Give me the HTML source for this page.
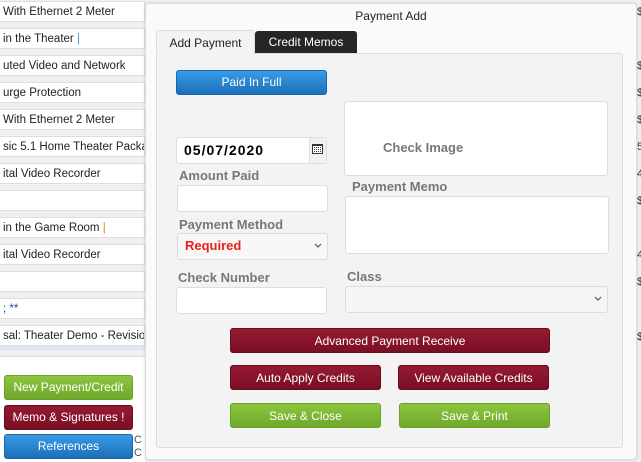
<!DOCTYPE html>
<html><head><style>
*{box-sizing:border-box;margin:0;padding:0}
body{width:641px;height:462px;position:relative;overflow:hidden;background:#f0f0f0;font-family:"Liberation Sans",sans-serif;font-size:11px;color:#222}
.a{position:absolute}
.row{position:absolute;left:0;width:145px;height:21px;background:#fff;border:1px solid #ddd;border-left:none;padding:4px 0 0 3px;white-space:nowrap;overflow:hidden;font-size:11.5px}
.btn{position:absolute;border-radius:3px;color:#fff;text-align:center;font-size:12px}
.red{background:linear-gradient(#951a32,#7a0f24);border:1px solid #6a0c1e}
.grn{background:linear-gradient(#8cc63f,#6fa82b);border:1px solid #68a028}
.blu{background:linear-gradient(#3a9be6,#1b6fb8);border:1px solid #1a66a8}
.lbl{position:absolute;font-weight:bold;color:#777;font-size:13px}
.inp{position:absolute;background:#fff;border:1px solid #ddd;border-radius:3px}
.r{position:absolute;left:637px;font-size:11px;color:#333}
</style></head><body>
<div class="row" style="top:1px">With Ethernet 2 Meter</div>
<div class="row" style="top:28px">in the Theater <span style="color:#4a90e2">|</span></div>
<div class="row" style="top:55px">uted Video and Network</div>
<div class="row" style="top:82px">urge Protection</div>
<div class="row" style="top:109px">With Ethernet 2 Meter</div>
<div class="row" style="top:136px">sic 5.1 Home Theater Package</div>
<div class="row" style="top:163px">ital Video Recorder</div>
<div class="row" style="top:190px"></div>
<div class="row" style="top:217px">in the Game Room <span style="color:#d08a30">|</span></div>
<div class="row" style="top:244px">ital Video Recorder</div>
<div class="row" style="top:271px"></div>
<div class="row" style="top:298px;color:#1a4fa0">; **</div>
<div class="row" style="top:325px">sal: Theater Demo - Revision:</div>
<div class="a" style="left:0;top:346px;width:145px;height:4px;background:#dde6f0"></div>
<div class="a" style="left:0;top:356px;width:145px;height:106px;background:#fff;border-top:1px solid #ddd"></div>
<div class="btn grn" style="left:4px;top:375px;width:129px;height:25px;line-height:23px">New Payment/Credit</div>
<div class="btn red" style="left:4px;top:405px;width:129px;height:25px;line-height:23px">Memo &amp; Signatures !</div>
<div class="btn blu" style="left:4px;top:434px;width:129px;height:25px;line-height:23px">References</div>
<div class="a" style="left:134px;top:434px;font-size:11px;color:#555;line-height:13px">C<br>C</div>
<div class="r" style="top:6px">$</div><div class="r" style="top:60px">$</div><div class="r" style="top:87px">$</div><div class="r" style="top:114px">$</div><div class="r" style="top:141px">5</div><div class="r" style="top:168px">4</div><div class="r" style="top:195px">$</div><div class="r" style="top:249px">4</div><div class="r" style="top:276px">$</div><div class="r" style="top:331px">$</div>
<div class="a" style="left:145px;top:3px;width:492px;height:457px;background:#fafafa;border:1px solid #ddd;border-radius:4px;box-shadow:0 0 3px rgba(0,0,0,.15)"></div>
<div class="a" style="left:145px;top:9px;width:492px;text-align:center;font-size:12px">Payment Add</div>
<div class="a" style="left:156px;top:53px;width:467px;height:395px;background:#f3f3f3;border:1px solid #ddd;border-radius:3px"></div>
<div class="a" style="left:156px;top:30px;width:99px;height:24px;background:#f3f3f3;border:1px solid #ddd;border-bottom:none;border-radius:3px 3px 0 0;text-align:center;line-height:25px;font-size:12px">Add Payment</div>
<div class="a" style="left:255px;top:31px;width:102px;height:22px;background:#262626;border-radius:3px 3px 0 0;color:#fff;text-align:center;line-height:23px;font-size:12px">Credit Memos</div>
<div class="btn blu" style="left:176px;top:70px;width:151px;height:25px;line-height:23px">Paid In Full</div>
<div class="inp" style="left:344px;top:101px;width:264px;height:75px"></div>
<div class="a" style="left:383px;top:140px;font-weight:bold;color:#777;font-size:13px">Check Image</div>
<div class="inp" style="left:176px;top:137px;width:151px;height:27px"></div>
<div class="a" style="left:309px;top:138px;width:17px;height:25px;background:#f0f0f0;border-left:1px solid #ddd"></div>
<svg class="a" style="left:312px;top:144px" width="11" height="10" viewBox="0 0 11 10"><rect x="0.5" y="0.5" width="10" height="9" fill="#fff" stroke="#333"/><rect x="0" y="0" width="11" height="2" fill="#333"/><g fill="#333"><rect x="2" y="3" width="1" height="1"/><rect x="4" y="3" width="1" height="1"/><rect x="6" y="3" width="1" height="1"/><rect x="8" y="3" width="1" height="1"/><rect x="2" y="5" width="1" height="1"/><rect x="4" y="5" width="1" height="1"/><rect x="6" y="5" width="1" height="1"/><rect x="8" y="5" width="1" height="1"/><rect x="2" y="7" width="1" height="1"/><rect x="4" y="7" width="1" height="1"/><rect x="6" y="7" width="1" height="1"/><rect x="8" y="7" width="1" height="1"/></g></svg>
<div class="a" style="left:184px;top:142px;font-weight:bold;font-size:14px;letter-spacing:1px;color:#000">05/07/2020</div>
<div class="lbl" style="left:179px;top:168px">Amount Paid</div>
<div class="inp" style="left:177px;top:185px;width:151px;height:27px"></div>
<div class="lbl" style="left:352px;top:179px">Payment Memo</div>
<div class="inp" style="left:345px;top:196px;width:264px;height:58px"></div>
<div class="lbl" style="left:179px;top:217px">Payment Method</div>
<div class="inp" style="left:177px;top:233px;width:151px;height:27px;background:#f7f7f7"></div>
<div class="a" style="left:185px;top:238px;font-weight:bold;font-size:13px;color:#e8211d">Required</div>
<svg class="a" style="left:314px;top:243px" width="8" height="5" viewBox="0 0 8 5"><path d="M1 1L4 4L7 1" fill="none" stroke="#555" stroke-width="1.2"/></svg>
<div class="lbl" style="left:178px;top:270px">Check Number</div>
<div class="inp" style="left:176px;top:287px;width:151px;height:27px"></div>
<div class="lbl" style="left:347px;top:269px">Class</div>
<div class="inp" style="left:345px;top:286px;width:263px;height:27px;background:#f5f5f5"></div>
<svg class="a" style="left:594px;top:296px" width="8" height="5" viewBox="0 0 8 5"><path d="M1 1L4 4L7 1" fill="none" stroke="#555" stroke-width="1.2"/></svg>
<div class="btn red" style="left:230px;top:328px;width:320px;height:25px;line-height:24px">Advanced Payment Receive</div>
<div class="btn red" style="left:230px;top:365px;width:151px;height:25px;line-height:24px">Auto Apply Credits</div>
<div class="btn red" style="left:398px;top:365px;width:151px;height:25px;line-height:24px">View Available Credits</div>
<div class="btn grn" style="left:230px;top:403px;width:151px;height:25px;line-height:24px">Save &amp; Close</div>
<div class="btn grn" style="left:399px;top:403px;width:151px;height:25px;line-height:24px">Save &amp; Print</div>
</body></html>
